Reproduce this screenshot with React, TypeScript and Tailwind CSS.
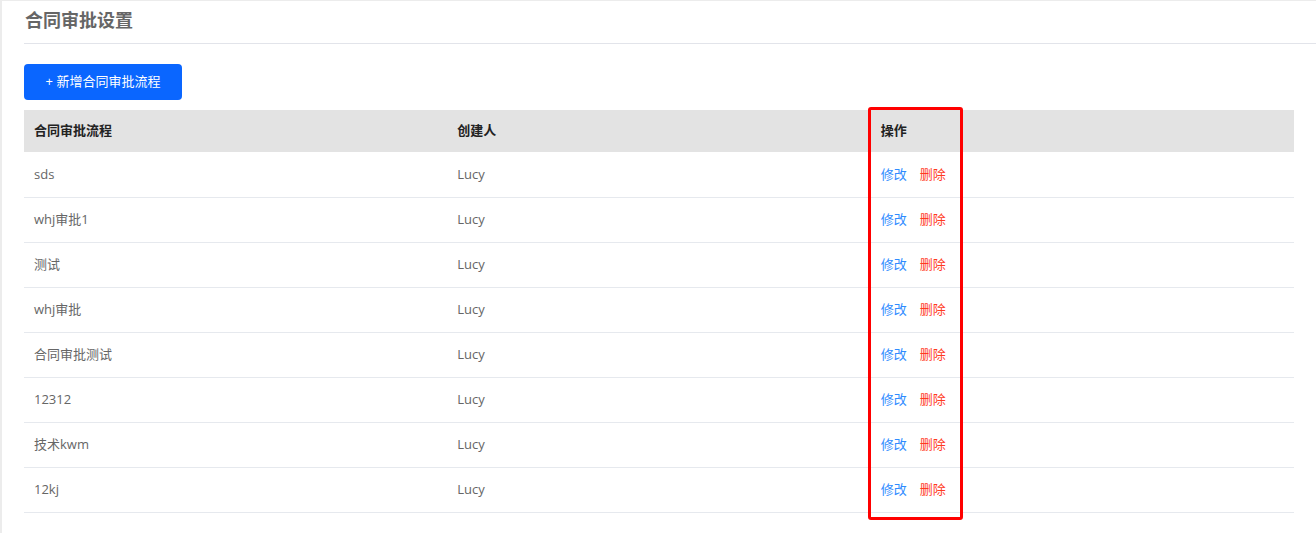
import React from 'react';

interface Flow {
  id: number;
  name: string;
  creator: string;
}

const flows: Flow[] = [
  { id: 1, name: 'sds', creator: 'Lucy' },
  { id: 2, name: 'whj审批1', creator: 'Lucy' },
  { id: 3, name: '测试', creator: 'Lucy' },
  { id: 4, name: 'whj审批', creator: 'Lucy' },
  { id: 5, name: '合同审批测试', creator: 'Lucy' },
  { id: 6, name: '12312', creator: 'Lucy' },
  { id: 7, name: '技术kwm', creator: 'Lucy' },
  { id: 8, name: '12kj', creator: 'Lucy' },
];

export default function App() {
  return (
    <div
      className="relative h-[533px] w-[1316px] overflow-hidden border-l-2 border-t border-[#ececec] bg-white"
      style={{ fontFamily: '"Open Sans", "Noto Sans CJK SC", sans-serif' }}
    >
      {/* Page title */}
      <div className="ml-[22px] flex h-[43px] items-center border-b border-[#e2e4ea] pb-[4px] pl-[1px]">
        <h1 className="text-[18px] font-bold text-[#666]">合同审批设置</h1>
      </div>

      <div className="pl-[22px] pr-[22px] pt-[20px]">
        <button className="flex h-[36px] w-[158px] items-center justify-center rounded-[4px] bg-[#0a66ff] text-[13px] text-white">
          + 新增合同审批流程
        </button>

        {/* Flow list */}
        <table className="mt-[10px] w-full table-fixed border-collapse text-[13px]">
          <thead>
            <tr className="h-[42px] bg-[#e3e3e3]">
              <th className="pl-[10px] text-left font-bold text-[#222]">合同审批流程</th>
              <th className="pl-[10px] text-left font-bold text-[#222]">创建人</th>
              <th className="pl-[10px] text-left font-bold text-[#222]">操作</th>
            </tr>
          </thead>
          <tbody>
            {flows.map((flow) => (
              <tr key={flow.id} className="h-[45px] border-b border-[#e6e9ee]">
                <td className="pl-[10px] text-[#666]">{flow.name}</td>
                <td className="pl-[10px] text-[#666]">{flow.creator}</td>
                <td className="pl-[10px]">
                  <span className="cursor-pointer text-[#2f8cff]">修改</span>
                  <span className="ml-[13px] cursor-pointer text-[#ff3b1f]">删除</span>
                </td>
              </tr>
            ))}
          </tbody>
        </table>
      </div>

      {/* Highlight around the action column */}
      <div className="pointer-events-none absolute left-[866px] top-[106px] h-[413px] w-[95px] rounded-[3px] border-[3px] border-[#ff0000]" />
    </div>
  );
}
